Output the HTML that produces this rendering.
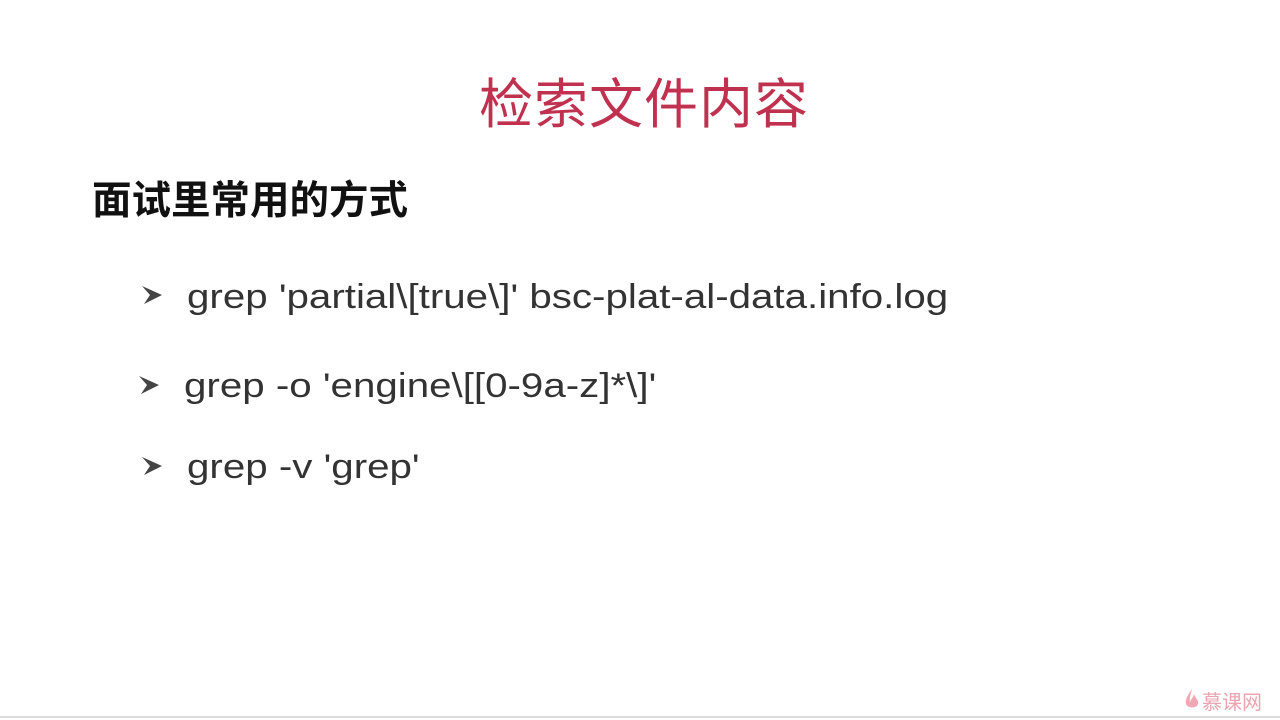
<!DOCTYPE html>
<html><head><meta charset="utf-8"><style>
html,body{margin:0;padding:0;background:#fff;width:1280px;height:720px;overflow:hidden;position:relative}
.t{position:absolute;left:0;width:1288px;text-align:center;top:60px;font:54px "Liberation Sans","Noto Sans CJK SC",sans-serif;color:#c0304f;letter-spacing:1px}
.s{position:absolute;left:92px;top:169px;font:bold 39.5px "Liberation Sans","Noto Sans CJK SC",sans-serif;color:#111}
.l{position:absolute;font:34px "Liberation Sans",sans-serif;color:#333;white-space:nowrap;transform:scaleX(1.185);transform-origin:0 0}
.b{position:absolute}
.bot{position:absolute;left:0;right:0;top:716px;height:2px;background:#ddd}
.logo{position:absolute;left:1202px;top:686px;font:20px "Noto Sans CJK SC",sans-serif;color:#e9a5b0}
</style></head><body>
<div class="t">检索文件内容</div>
<div class="s">面试里常用的方式</div>
<svg class="b" style="left:141px;top:285px" width="22" height="20" viewBox="0 0 22 20"><path d="M1 1 L21 10 L3 19 L9 10 Z" fill="#444"/></svg>
<div class="l" style="left:187px;top:278px">grep 'partial\[true\]' bsc-plat-al-data.info.log</div>
<svg class="b" style="left:138px;top:375px" width="22" height="20" viewBox="0 0 22 20"><path d="M1 1 L21 10 L3 19 L9 10 Z" fill="#444"/></svg>
<div class="l" style="left:184px;top:367px">grep -o 'engine\[[0-9a-z]*\]'</div>
<svg class="b" style="left:141px;top:456px" width="22" height="20" viewBox="0 0 22 20"><path d="M1 1 L21 10 L3 19 L9 10 Z" fill="#444"/></svg>
<div class="l" style="left:187px;top:448px">grep -v 'grep'</div>
<div class="bot"></div>
<svg style="position:absolute;left:1183px;top:688px" width="18" height="22" viewBox="0 0 18 22"><path d="M9 1 C4 8 2 12 3 16 C4 20 14 21 15 16 C16 12 12 10 11 6 C10 10 8 11 7 14 C6 10 8 6 9 1Z" fill="#f0a8b4"/></svg>
<div class="logo">慕课网</div>
</body></html>
